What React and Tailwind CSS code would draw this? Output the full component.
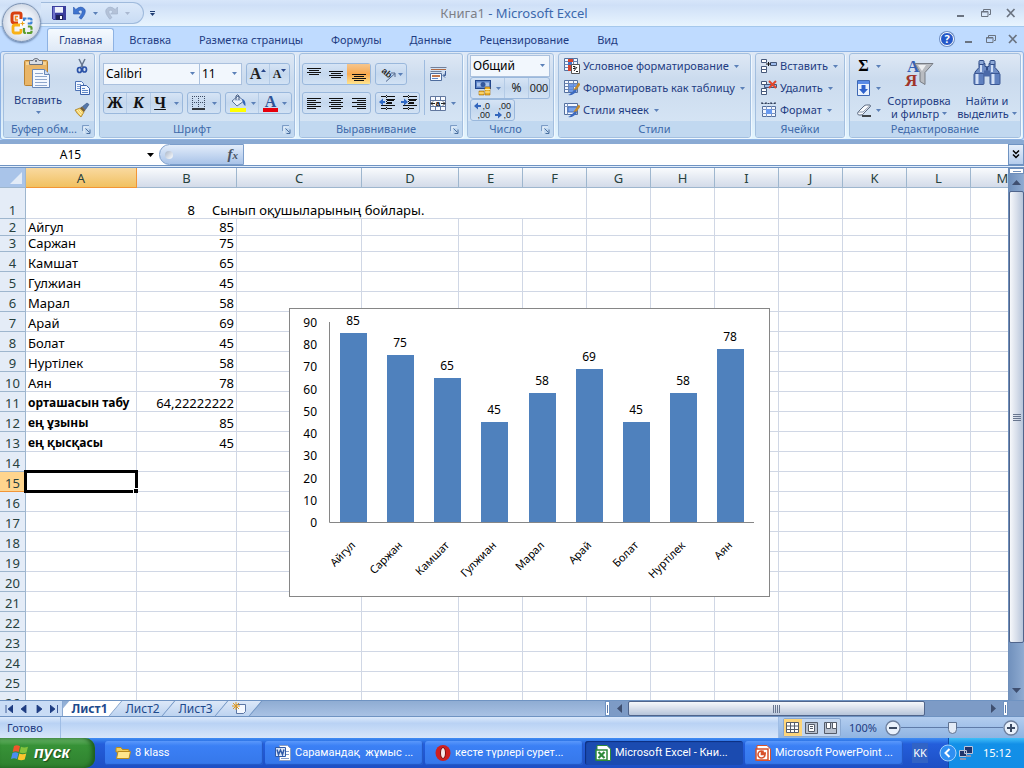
import { useState } from "react";
import clsx from "clsx";

const COLUMNS = [
  ["A", 111], ["B", 100], ["C", 125], ["D", 97], ["E", 64], ["F", 64], ["G", 64], ["H", 64], ["I", 64],
  ["J", 64], ["K", 64], ["L", 64], ["M", 64],
];

const ROWS = {
  2: ["Айгул", "85"],
  3: ["Саржан", "75"],
  4: ["Камшат", "65"],
  5: ["Гулжиан", "45"],
  6: ["Марал", "58"],
  7: ["Арай", "69"],
  8: ["Болат", "45"],
  9: ["Нуртілек", "58"],
  10: ["Аян", "78"],
  11: ["орташасын табу", "64,22222222"],
  12: ["ең ұзыны", "85"],
  13: ["ең қысқасы", "45"],
};

const ROW_COUNT = 26;
const SERIES = Object.entries(ROWS).filter(([n]) => n <= 10).map(([, [name, value]]) => ({ name, value: Number(value) }));

/* ---------- small shared parts ---------- */

function Arrow({ className = "text-[#5b80b8]" }) {
  return (
    <svg width="5" height="3" viewBox="0 0 5 3" className={clsx("shrink-0", className)} aria-hidden="true">
      <path d="M0 0h5L2.500 3z" fill="currentColor" />
    </svg>
  );
}

function Box({ children, className }) {
  return (
    <div className={clsx("flex h-[22px] rounded-[3px] border border-[#9ab8dc] bg-linear-to-b from-[#d6e4f5] via-[#c5d8ee] to-[#d2e2f4]", className)}>
      {children}
    </div>
  );
}

function Tool({ label, children, className = "w-[22px]" }) {
  return (
    <button type="button" aria-label={label} className={clsx("flex items-center justify-center", className)}>
      {children}
    </button>
  );
}

function Dropdown({ label, value, className }) {
  return (
    <div className={clsx("relative h-[22px] border border-[#abc1de] bg-[#f2f7fd]", className)}>
      <select aria-label={label} defaultValue={value} className="block h-5 w-full appearance-none bg-transparent pl-[2px] text-[12px] leading-5 text-black outline-none">
        <option>{value}</option>
      </select>
      <span className="pointer-events-none absolute top-[8px] right-[4px] flex">
        <Arrow />
      </span>
    </div>
  );
}

function Group({ title, launcher, className, children }) {
  return (
    <section className={clsx("flex h-[85px] shrink-0 flex-col overflow-hidden rounded-[3px] border border-[#a3bfdf] bg-linear-to-b from-[#dee8f5] via-[#cbdbee] via-30% to-[#d8e7f6] shadow-[1px_1px_0_#f0f8ff]", className)}>
      <div className="flex min-h-0 flex-1">{children}</div>
      <div className="flex h-4 items-center bg-[#c1d8f0] px-[3px] text-[11px] leading-4 text-[#3e6aaa]">
        <span className="flex-1 text-center whitespace-nowrap">{title}</span>
        {launcher && (
          <button type="button" aria-label={"Параметры: " + title} className="ml-px">
            <svg width="9" height="9" viewBox="0 0 9 9" fill="none">
              <path d="M.5 6V.5H7" stroke="#7c9cc6" />
              <path d="M3.500 3.500l4 4M8 4.500v4H4.500" stroke="#4a6f9f" />
              <path d="M2 8.500V2h5" stroke="#fff" opacity=".7" />
            </svg>
          </button>
        )}
      </div>
    </section>
  );
}

function Command({ icon, children }) {
  return (
    <button type="button" className="flex h-[22px] items-center whitespace-nowrap text-[11px] leading-4 text-[#1e3c82]">
      {icon}
      <span className="mr-[5px] ml-[3px]">{children}</span>
      <Arrow />
    </button>
  );
}

/* ---------- icons ---------- */

function Lines({ rows }) {
  return (
    <svg width="16" height="16" viewBox="0 0 16 16" aria-hidden="true">
      {rows.map(([x, y, w]) => (
        <rect key={y} x={x} y={y} width={w} height="1" fill="#111" />
      ))}
    </svg>
  );
}

const ALIGN_V = {
  top: [[1, 2, 14], [3, 4, 10], [1, 6, 14], [3, 8, 10]],
  middle: [[1, 5, 14], [3, 7, 10], [1, 9, 14], [3, 11, 10]],
  bottom: [[1, 8, 14], [3, 10, 10], [1, 12, 14], [3, 14, 10]],
};
const ALIGN_H = {
  left: [[1, 3, 14], [1, 5, 9], [1, 7, 14], [1, 9, 9], [1, 11, 14], [1, 13, 9]],
  center: [[1, 3, 14], [3, 5, 10], [1, 7, 14], [3, 9, 10], [1, 11, 14], [3, 13, 10]],
  right: [[1, 3, 14], [6, 5, 9], [1, 7, 14], [6, 9, 9], [1, 11, 14], [6, 13, 9]],
};

function IndentIcon({ inward }) {
  return (
    <svg width="18" height="16" viewBox="0 0 18 16" aria-hidden="true">
      <path d="M3 1.500h5M9 1.500h8M9 4.500h8M9 7.500h5M3 10.500h5M9 10.500h8M3 13.500h5M9 13.500h5" stroke="#111" />
      <path d="M9 4h7v2H9zM9 7h5v2H9z" fill="#111" />
      <path d="M8.500 0v15" stroke="#111" strokeDasharray="1 1" />
      {inward ? <path d="M1 6h3V3.500L8 7l-4 3.500V8H1z" fill="#2f68c4" /> : <path d="M7 6H5V3.500L1 7l4 3.500V8h2z" fill="#2f68c4" />}
    </svg>
  );
}

function OfficeLogo() {
  return (
    <svg width="24" height="24" viewBox="0 0 24 24" fill="none" aria-hidden="true">
      <path d="M11 8V3.500Q11 2 9.500 2h-5Q2 2 2 4.500v5Q2 12 4.500 12H8" stroke="#d8400f" strokeWidth="3" />
      <path d="M8 5.500H5.500V9H8" stroke="#f58a1f" strokeWidth="1.500" />
      <path d="M14 10V7.500h6q1.500 0 1.500 1.500v2q0 1.500-1.500 1.500h-3" stroke="#3b83d6" strokeWidth="2.200" strokeDasharray="5 1" />
      <path d="M10 14H5q-2 0-2 2v4q0 2 2 2h4q2 0 2-2v-2" stroke="#f9b115" strokeWidth="2.800" />
      <path d="M14 17v3.500q0 1.500 1.500 1.500h4.500q1.500 0 1.500-1.500V17q0-1.500-1.500-1.500h-3" stroke="#5d9d2f" strokeWidth="2.200" strokeDasharray="6 1" />
      <path d="M10.500 12.500h4M12.500 10.500v4" stroke="#e9a21c" strokeWidth="1.200" />
    </svg>
  );
}

function SaveIcon() {
  return (
    <svg width="14" height="14" viewBox="0 0 14 14" aria-hidden="true">
      <path d="M0 0h14v14H1.500L0 12.500z" fill="#3a3d9c" />
      <path d="M1 1h2v12H1z" fill="#6e72cc" />
      <path d="M3 1h8v6H3z" fill="#eef1fb" />
      <path d="M3 6h8v1H3z" fill="#b9bfe5" />
      <path d="M4 9h7v5H4z" fill="#1f2358" />
      <path d="M8 10h2v3H8z" fill="#fff" />
    </svg>
  );
}

function UndoIcon({ redo }) {
  return (
    <svg width="13" height="14" viewBox="0 0 13 14" className={redo ? "-scale-x-100" : ""} aria-hidden="true">
      <path d="M.5 1v7h7L5 5.800Q7 3.400 8.600 4.400 10.400 6.500 6 11.500l2.200 1.700Q14 6.500 11.600 3 8-1 2.800 3.500z" fill={redo ? "#b4c2d8" : "#3f74cf"} stroke={redo ? "#9fb0ca" : "#2c58ac"} strokeWidth=".6" />
    </svg>
  );
}

function PasteIcon() {
  return (
    <svg width="28" height="32" viewBox="0 0 28 32" aria-hidden="true">
      <rect x=".5" y="2.500" width="23" height="25" rx="1" fill="#e9b567" stroke="#b98233" />
      <path d="M2 4h20v3H2z" fill="#f6d394" />
      <path d="M5.500 6.500v-3q0-1 1-1H9Q9.500.5 12 .5t3 2h2.500q1 0 1 1v3z" fill="#d9dde4" stroke="#6b7280" />
      <circle cx="12" cy="3" r="1" fill="#555d6b" />
      <path d="M8.500 11.500h12l5 5v13h-17z" fill="#f4f8ff" stroke="#6787b8" />
      <path d="M20.500 11.500v5h5" fill="#cfdcf0" stroke="#6787b8" />
      <path d="M11 15.500h8M11 18.500h12M11 21.500h12M11 24.500h12M11 27.500h12" stroke="#8ea6cc" />
    </svg>
  );
}

function CutIcon() {
  return (
    <svg width="16" height="16" viewBox="0 0 16 16" fill="none" aria-hidden="true">
      <path d="M5 1l4.500 9M11 1L6.500 10" stroke="#66768f" strokeWidth="1.500" />
      <ellipse cx="5.500" cy="12" rx="2" ry="2.500" stroke="#2b52a8" strokeWidth="1.700" />
      <ellipse cx="10.500" cy="11.500" rx="2" ry="2.500" stroke="#2b52a8" strokeWidth="1.700" />
    </svg>
  );
}

function CopyIcon() {
  return (
    <svg width="16" height="16" viewBox="0 0 16 16" aria-hidden="true">
      <path d="M1.500 1.500h6l2 2v7h-8z" fill="#f2f7ff" stroke="#4c72b5" />
      <path d="M3 4.500h4M3 6.500h5M3 8.500h3" stroke="#7d9fd4" />
      <path d="M6.500 5.500h6l3 3v6h-9z" fill="#f2f7ff" stroke="#3c62aa" />
      <path d="M8 8.500h3M8 10.500h6M8 12.500h6" stroke="#5f86c6" />
    </svg>
  );
}

function BrushIcon() {
  return (
    <svg width="16" height="16" viewBox="0 0 16 16" aria-hidden="true">
      <path d="M1 8l5-2 4 4-3 5Q3 12 1 8z" fill="#f2cf63" stroke="#a97d22" strokeWidth=".8" />
      <path d="M3 8l4 5M5 7.500l3 4" stroke="#fff3c0" />
      <path d="M6 6l2-1.500L11.500 8 10 10z" fill="#76603c" />
      <path d="M8.500 4.500L13 1l2 1.500-3.500 5z" fill="#5677a9" stroke="#31517f" strokeWidth=".6" />
    </svg>
  );
}

function BorderIcon() {
  return (
    <svg width="14" height="14" viewBox="0 0 14 14" aria-hidden="true">
      <path d="M.5 0v12M6.500 0v12M12.500 0v12M0 .5h13M0 6.500h13" stroke="#3c4b63" strokeDasharray="1 1" />
      <path d="M0 13h13" stroke="#000" strokeWidth="1.500" />
    </svg>
  );
}

function FillIcon() {
  return (
    <svg width="18" height="18" viewBox="0 0 18 18" aria-hidden="true">
      <path d="M3 7l6-5 6 5-7 5z" fill="#eaf1fb" stroke="#54709c" />
      <path d="M5 7l4-3 4 3z" fill="#c0d0e8" />
      <path d="M7 6V2q1.500-2.500 3 0v4" fill="none" stroke="#44597c" />
      <path d="M13 5q4 1 3.500 7Q14 11 13 5z" fill="#3465b5" />
      <rect x="1" y="14" width="16" height="4" fill="#ff0" />
    </svg>
  );
}

function OrientationIcon() {
  return (
    <svg width="17" height="17" viewBox="0 0 17 17" aria-hidden="true">
      <text x="2" y="9" transform="rotate(40 6 6)" fontFamily="Liberation Sans" fontSize="9" fontWeight="700" fill="#2b2b2b">ab</text>
      <path d="M6 15.500l9-8M11 7h4v4" fill="none" stroke="#53688c" />
    </svg>
  );
}

function WrapIcon() {
  return (
    <svg width="17" height="16" viewBox="0 0 17 16" aria-hidden="true">
      <path d="M.5 1.500h16M.5 5.500h11" stroke="#70809c" />
      <path d="M1 3.500h15" stroke="#b06a44" />
      <path d="M.5 7.500h11v7H.5z" fill="#f7faff" stroke="#4e6c9d" />
      <path d="M2 10h8" stroke="#c0764c" strokeWidth="2" />
      <path d="M2 12.500h6" stroke="#5f86c6" />
      <path d="M15.500 5v4.500h-2M15 7.500l-2 2 2 2" fill="none" stroke="#3c5d96" />
    </svg>
  );
}

function MergeIcon() {
  return (
    <svg width="16" height="15" viewBox="0 0 16 15" aria-hidden="true">
      <path d="M.5.5h15v14H.5zM.5 4.500h15M.5 10.500h15M5.500.5v4M10.500.5v4M5.500 10.500v4M10.500 10.500v4" fill="#f7faff" stroke="#61779e" />
      <path d="M1 7.500h4M11 7.500h4M3 5.500L1 7.500l2 2M13 5.500l2 2-2 2" fill="none" stroke="#222" />
      <text x="8" y="10" textAnchor="middle" fontFamily="Liberation Sans" fontSize="8" fontWeight="700">a</text>
    </svg>
  );
}

function CurrencyIcon() {
  return (
    <svg width="17" height="16" viewBox="0 0 17 16" aria-hidden="true">
      <rect x=".5" y=".5" width="15" height="8" fill="#5b83c7" stroke="#22468c" />
      <path d="M2 2.500h12v4H2z" fill="#a9c3ec" />
      <ellipse cx="8" cy="4.500" rx="2.500" ry="2.500" fill="#34589d" />
      <path d="M10 7h5v8h-5zM4 11h5v4H4z" fill="#eeb229" stroke="#a56d0d" strokeWidth=".6" />
      <path d="M10 9.500h5M10 12h5M4 13h5" stroke="#fff0a8" />
    </svg>
  );
}

function DecimalIcon({ less }) {
  return (
    <svg width="18" height="20" viewBox="0 0 18 20" aria-hidden="true">
      <g fontFamily="Liberation Sans" fontSize="9" fill="#1d1d1d" textAnchor="end">
        <text x="17" y="9">{less ? ",00" : ",0"}</text>
        <text x="17" y="18">{less ? ",0" : ",00"}</text>
      </g>
      {less ? <path d="M1 14h3v-2.500L8 15l-4 3.500V16H1z" fill="#3366bd" /> : <path d="M8 5H5V2.500L1 6l4 3.500V7h3z" fill="#3366bd" />}
    </svg>
  );
}

function GridIcon({ kind }) {
  return (
    <svg width="16" height="16" viewBox="0 0 16 16" aria-hidden="true">
      {kind === "styles" ? (
        <>
          <path d="M.5 1.500h13v11H.5z" fill="#f4f8ff" stroke="#54709f" />
          <path d="M.5 4.500h13M3.500 1.500v11" stroke="#7c94bd" />
          <path d="M4 5h9v5H4z" fill="#78a3ea" stroke="#426dba" />
        </>
      ) : (
        <>
          <path d="M.5.5h13v12H.5z" fill="#f4f8ff" stroke="#54709f" />
          <path d="M.5 3.500h13M.5 6.500h13M.5 9.500h13M4.500.5v12M9.500.5v12" stroke="#6b85b2" />
        </>
      )}
      {kind === "conditional" && (
        <>
          <path d="M4 1h5v3H4zM4 7h3v6H4z" fill="#d9432e" />
          <path d="M4 4h4v3H4z" fill="#436fc5" />
          <path d="M7.500 6.500h8v9h-8z" fill="#fff" stroke="#555" />
          <path d="M9 8.500h2v2H9M12 13.500h2M10 13l3-4" fill="none" stroke="#222" />
        </>
      )}
      {kind === "table" && <path d="M5 4h8v3H5zM5 7h4v5H5z" fill="#5b8be0" opacity=".85" />}
      {kind !== "conditional" && (
        <>
          <path d="M15.500 3.500l-5 7" stroke="#c58b2c" strokeWidth="2.500" />
          <path d="M11.500 9L7 13q-2 2-3 2 5 1 9-4z" fill="#3c6ac0" />
        </>
      )}
    </svg>
  );
}

function CellsIcon({ kind }) {
  if (kind === "format") {
    return (
      <svg width="16" height="16" viewBox="0 0 16 16" aria-hidden="true">
        <path d="M.5 1.500h14M1 0v3M5 0v3M10 0v3M14 0v3" stroke="#2e3e5a" strokeDasharray="2 1" />
        <path d="M1.500 4.500h13v10h-13z" fill="#f4f8ff" stroke="#54709f" />
        <path d="M5.500 4v11M10.500 4v11M1 7.500h14M1 11.500h14" stroke="#7c94bd" />
        <path d="M5 7h6v5H5z" fill="#6a9bf0" />
      </svg>
    );
  }
  return (
    <svg width="16" height="16" viewBox="0 0 16 16" aria-hidden="true">
      <path d="M.5 1.500h5v3h-5zM.5 8.500h5v3h-5zM.5 11.500h5v3h-5z" fill="#fff" stroke="#46597a" />
      <path d="M9.500 4.500h6v3h-6z" fill="#9ebcec" stroke="#46597a" />
      {kind === "insert" ? (
        <path d="M5 6h5M7.500 4v4" stroke="#111" />
      ) : (
        <>
          <path d="M3.500 4.500h6v3h-6z" fill="#9ebcec" stroke="#46597a" />
          <path d="M8 1l7 7M15 1L8 8" stroke="#e2472c" strokeWidth="2" />
        </>
      )}
    </svg>
  );
}

function FillDownIcon() {
  return (
    <svg width="13" height="16" viewBox="0 0 13 16" aria-hidden="true">
      <path d="M.5.5h12v15H.5z" fill="#e9f1fd" stroke="#3f68b3" />
      <path d="M1 1h11v3H1z" fill="#5a8be6" />
      <path d="M4.500 5h4v4h2.500l-4.500 5L2 9h2.500z" fill="#2f62cc" />
    </svg>
  );
}

function EraserIcon() {
  return (
    <svg width="15" height="13" viewBox="0 0 15 13" aria-hidden="true">
      <path d="M1 8l6-6q1-1 2.500-1H13q1 1 0 2L7 9q-1 2-3 2H1.500Q0 10 1 8z" fill="#f8fafd" stroke="#5c6a80" />
      <path d="M1 8h5l7-6.500" fill="none" stroke="#8b98ad" />
      <path d="M5 12h9" stroke="#111" strokeWidth="1.500" />
    </svg>
  );
}

function SortIcon() {
  return (
    <svg width="30" height="34" viewBox="0 0 30 34" aria-hidden="true">
      <text x="3" y="14" fontFamily="Liberation Serif" fontSize="17" fontWeight="700" fill="#3561b4">А</text>
      <text x="1" y="28" fontFamily="Liberation Serif" fontSize="17" fontWeight="700" fill="#a0352b">Я</text>
      <path d="M11 5.500h18l-8 9v12l-5-3v-9z" fill="#b9bcc1" stroke="#777c84" />
      <path d="M14 7h8L18 13z" fill="#eceef0" />
    </svg>
  );
}

function FindIcon() {
  return (
    <svg width="28" height="26" viewBox="0 0 28 26" aria-hidden="true">
      <path d="M6 3.500h6v3h1.500v4h1v-4H16v-3h6v4l4 4.500v3H2v-3l4-4.500z" fill="#6e8cc4" stroke="#2f4b86" />
      <rect x="6" y=".5" width="5" height="4" rx="1" fill="#8faad8" stroke="#2f4b86" />
      <rect x="17" y=".5" width="5" height="4" rx="1" fill="#8faad8" stroke="#2f4b86" />
      <rect x="1" y="13.500" width="10" height="11" rx="1" fill="#5f80bf" stroke="#3c5894" />
      <rect x="17" y="13.500" width="10" height="11" rx="1" fill="#5f80bf" stroke="#3c5894" />
      <path d="M11 10.500h6v6h-6z" fill="#4a69a8" />
      <path d="M4 14v10M20 14v10" stroke="#d3e0f6" strokeWidth="3" />
      <path d="M8 5v7M19 5v7" stroke="#cfdef6" strokeWidth="2" />
    </svg>
  );
}

function WindowButtons({ className }) {
  return (
    <div className={clsx("flex items-center text-[#6a7380]", className)}>
      <button type="button" aria-label="Свернуть">
        <svg width="10" height="10" viewBox="0 0 10 10"><path d="M1 8h7" stroke="currentColor" strokeWidth="2" /></svg>
      </button>
      <button type="button" aria-label="Восстановить">
        <svg width="10" height="10" viewBox="0 0 10 10" fill="none">
          <path d="M2.500 3V1.500h7v5H8" stroke="currentColor" />
          <path d="M.5 3.500H7v5H.5zM.5 4h6" stroke="currentColor" />
        </svg>
      </button>
      <button type="button" aria-label="Закрыть">
        <svg width="10" height="10" viewBox="0 0 10 10"><path d="M1 1l7.500 8M8.500 1L1 9" stroke="currentColor" strokeWidth="1.700" /></svg>
      </button>
    </div>
  );
}

/* ---------- window head ---------- */

function TitleBar() {
  return (
    <header className="relative flex h-[27px] shrink-0 items-center justify-between border-b border-[#a5c8ec] bg-linear-to-b from-[#d7e6fa] via-[#cfe0f7] via-20% to-[#e8f4fe]">
      <button type="button" aria-label="Кнопка Office" className="absolute top-[3px] left-[2px] z-10 flex size-[39px] items-center justify-center rounded-full border border-[#7d93b3] bg-radial from-white via-[#e8edf5] to-[#b3bfd1] shadow-[0_1px_2px_#5f7ba5]">
        <OfficeLogo />
      </button>
      <div className="ml-[41px] flex items-center">
        <div className="flex h-[22px] w-[103px] items-center gap-[7px] rounded-r-full border border-l-0 border-[#9fbadc] bg-linear-to-b from-[#dce9fa] to-[#c9dcf4] pl-[11px]">
          <button type="button" aria-label="Сохранить"><SaveIcon /></button>
          <button type="button" aria-label="Отменить"><UndoIcon /></button>
          <Arrow />
          <button type="button" aria-label="Вернуть"><UndoIcon redo /></button>
          <Arrow className="text-[#a9b8d0]" />
        </div>
        <button type="button" aria-label="Настройка панели" className="ml-[6px] flex flex-col items-center gap-px border-t border-[#1e3c72] pt-px">
          <Arrow className="text-[#1e3c72]" />
        </button>
      </div>
      <h1 className="absolute inset-x-0 pl-1 text-center text-[13px] leading-4 text-[#3c69ad]">
        <span className="text-[#7d8087]">Книга1</span> - Microsoft Excel
      </h1>
      <div className="mr-2">
        <WindowButtons className="gap-[15px]" />
      </div>
    </header>
  );
}

const TABS = ["Главная", "Вставка", "Разметка страницы", "Формулы", "Данные", "Рецензирование", "Вид"];

function RibbonTabs() {
  const [active, setActive] = useState(TABS[0]);
  return (
    <nav className="flex h-6 shrink-0 items-end bg-[#bfdbff] pr-[6px] pl-[47px]">
      {TABS.map((tab) => (
        <button
          key={tab}
          type="button"
          onClick={() => setActive(tab)}
          className={clsx(
            "h-[23px] rounded-t-[3px] border border-b-0 text-[11px] leading-4 text-[#1e3c82]",
            tab === active ? "mr-px border-[#8db2e3] bg-linear-to-b from-[#f5faff] to-[#dfe9f6] px-[11px]" : "border-transparent px-[13px]"
          )}
        >
          {tab}
        </button>
      ))}
      <div className="ml-auto flex items-center gap-[10px] self-center">
        <button type="button" aria-label="Справка" className="flex size-[14px] items-center justify-center rounded-full border border-white bg-[#2458c8] text-[11px] leading-3 font-bold text-white shadow-[0_0_0_1px_#6f8fc4]">
          ?
        </button>
        <WindowButtons className="gap-[12px]" />
      </div>
    </nav>
  );
}

function ClipboardGroup() {
  return (
    <Group title="Буфер обм..." launcher className="w-[92px]">
      <button type="button" className="flex w-[68px] flex-col items-center pt-[4px] text-[11px] leading-4 text-[#1e3c82]">
        <PasteIcon />
        <span className="mt-[2px] mb-[3px]">Вставить</span>
        <Arrow />
      </button>
      <div className="flex flex-col justify-between pt-[4px] pb-[3px] pl-[2px]">
        <button type="button" aria-label="Вырезать"><CutIcon /></button>
        <button type="button" aria-label="Копировать"><CopyIcon /></button>
        <button type="button" aria-label="Формат по образцу"><BrushIcon /></button>
      </div>
    </Group>
  );
}

function FontGroup() {
  return (
    <Group title="Шрифт" launcher className="w-[196px]">
      <div className="flex flex-col gap-[7px] px-[3px] pt-[9px]">
        <div className="flex">
          <Dropdown label="Шрифт" value="Calibri" className="w-[97px]" />
          <Dropdown label="Размер" value="11" className="mr-1 w-[42px] border-l-0" />
          <Box>
            <Tool label="Увеличить размер шрифта">
              <span className="font-['Liberation_Serif',serif] text-[16px] leading-5 font-bold text-[#222]">A</span>
              <Arrow className="mb-2 rotate-180 text-[#27468a]" />
            </Tool>
            <Tool label="Уменьшить размер шрифта" className="w-5 border-l border-[#b4cbe6]">
              <span className="font-['Liberation_Serif',serif] text-[12px] leading-5 font-bold text-[#222]">A</span>
              <Arrow className="mb-2 text-[#27468a]" />
            </Tool>
          </Box>
        </div>
        <div className="flex gap-1 font-['Liberation_Serif',serif] text-[16px] leading-4 font-bold text-[#111]">
          <Box className="w-[80px]">
            <Tool label="Полужирный">Ж</Tool>
            <Tool label="Курсив" className="w-[24px] border-l border-[#b4cbe6] italic">К</Tool>
            <Tool label="Подчеркнутый" className="flex-1 gap-[8px] border-l border-[#b4cbe6]"><span className="underline">Ч</span><Arrow /></Tool>
          </Box>
          <Box className="w-[34px]">
            <Tool label="Границы" className="flex-1 gap-[6px]"><BorderIcon /><Arrow /></Tool>
          </Box>
          <Box className="w-[67px]">
            <Tool label="Цвет заливки" className="flex-1 gap-[4px]"><FillIcon /><Arrow /></Tool>
            <Tool label="Цвет текста" className="flex-1 gap-[4px] border-l border-[#b4cbe6]">
              <span className="h-[18px] border-b-4 border-red-600 px-[2px] text-[16px] leading-4 text-[#2f5496]">A</span>
              <Arrow />
            </Tool>
          </Box>
        </div>
      </div>
    </Group>
  );
}

function AlignmentGroup() {
  return (
    <Group title="Выравнивание" launcher className="w-[164px]">
      <div className="flex flex-col gap-[7px] pt-[9px] pl-[2px]">
        <div className="flex gap-1">
          <Box className="w-[69px]">
            <Tool label="По верхнему краю"><Lines rows={ALIGN_V.top} /></Tool>
            <Tool label="По середине"><Lines rows={ALIGN_V.middle} /></Tool>
            <Tool label="По нижнему краю" className="flex-1 bg-linear-to-b from-[#f5c58c] via-[#f9a94c] to-[#fde48f]"><Lines rows={ALIGN_V.bottom} /></Tool>
          </Box>
          <Box className="w-[32px]">
            <Tool label="Ориентация" className="flex-1 gap-px"><OrientationIcon /><Arrow /></Tool>
          </Box>
        </div>
        <div className="flex gap-1">
          <Box className="w-[69px]">
            <Tool label="По левому краю"><Lines rows={ALIGN_H.left} /></Tool>
            <Tool label="По центру"><Lines rows={ALIGN_H.center} /></Tool>
            <Tool label="По правому краю" className="flex-1"><Lines rows={ALIGN_H.right} /></Tool>
          </Box>
          <Box className="w-[45px]">
            <Tool label="Уменьшить отступ"><IndentIcon /></Tool>
            <Tool label="Увеличить отступ" className="flex-1"><IndentIcon inward /></Tool>
          </Box>
        </div>
      </div>
      <div className="my-[6px] ml-1 w-px bg-[#9ebbdf]" />
      <div className="flex flex-col gap-[7px] pt-[9px] pl-[5px]">
        <Tool label="Перенос текста" className="h-[22px] w-[17px]"><WrapIcon /></Tool>
        <Tool label="Объединить" className="h-[22px] gap-[5px]"><MergeIcon /><Arrow /></Tool>
      </div>
    </Group>
  );
}

function NumberGroup() {
  return (
    <Group title="Число" launcher className="w-[87px]">
      <div className="flex flex-col pt-px pl-[2px]">
        <Dropdown label="Числовой формат" value="Общий" className="w-[80px]" />
        <Box className="w-[80px] text-[12px] leading-4 text-[#222]">
          <Tool label="Финансовый формат" className="w-[33px] gap-[4px]"><CurrencyIcon /><Arrow /></Tool>
          <Tool label="Процентный формат" className="w-[24px] border-l border-[#b4cbe6]">%</Tool>
          <Tool label="Формат с разделителями" className="flex-1 border-l border-[#b4cbe6]">
            <span className="font-['Liberation_Sans',sans-serif] text-[11px]">000</span>
          </Tool>
        </Box>
        <Box className="w-[45px]">
          <Tool label="Увеличить разрядность"><DecimalIcon /></Tool>
          <Tool label="Уменьшить разрядность"><DecimalIcon less /></Tool>
        </Box>
      </div>
    </Group>
  );
}

function EditingGroup() {
  return (
    <Group title="Редактирование" className="w-[172px]">
      <div className="flex w-[34px] flex-col items-start pt-px pl-[7px]">
        <Tool label="Сумма" className="h-[22px] gap-[6px]"><span className="w-[13px] font-['Liberation_Serif',serif] text-[16px] font-bold">Σ</span><Arrow /></Tool>
        <Tool label="Заполнить" className="h-[22px] gap-[6px]"><FillDownIcon /><Arrow /></Tool>
        <Tool label="Очистить" className="h-[22px] gap-[4px]"><EraserIcon /><Arrow /></Tool>
      </div>
      <button type="button" className="flex w-[70px] flex-col items-center pt-[4px] text-[11px] leading-[13px] whitespace-nowrap text-[#1e3c82]">
        <span className="flex h-[36px]"><SortIcon /></span>
        <span>Сортировка</span>
        <span className="flex items-center gap-[3px]">и фильтр <Arrow /></span>
      </button>
      <button type="button" className="flex flex-1 flex-col items-center pt-[4px] text-[11px] leading-[13px] whitespace-nowrap text-[#1e3c82]">
        <span className="flex h-[36px] pt-[2px]"><FindIcon /></span>
        <span>Найти и</span>
        <span className="flex items-center gap-[3px]">выделить <Arrow /></span>
      </button>
    </Group>
  );
}

function Ribbon() {
  return (
    <div className="shrink-0 border-b-4 border-[#8aaad3] bg-[#bfdbff]">
      <div className="flex gap-1 overflow-hidden rounded-[3px] border border-[#8db2e3] bg-linear-to-b from-[#dfe9f6] via-[#d2e2f4] to-[#e3f5fe] px-[2px] pt-px pb-px">
        <ClipboardGroup />
        <FontGroup />
        <AlignmentGroup />
        <NumberGroup />
        <Group title="Стили" className="w-[193px]">
          <div className="flex flex-col items-start pt-px pl-[5px]">
            <Command icon={<GridIcon kind="conditional" />}>Условное форматирование</Command>
            <Command icon={<GridIcon kind="table" />}>Форматировать как таблицу</Command>
            <Command icon={<GridIcon kind="styles" />}>Стили ячеек</Command>
          </div>
        </Group>
        <Group title="Ячейки" className="w-[90px]">
          <div className="flex flex-col items-start pt-px pl-[5px]">
            <Command icon={<CellsIcon kind="insert" />}>Вставить</Command>
            <Command icon={<CellsIcon kind="delete" />}>Удалить</Command>
            <Command icon={<CellsIcon kind="format" />}>Формат</Command>
          </div>
        </Group>
        <EditingGroup />
      </div>
    </div>
  );
}

function FormulaBar() {
  return (
    <div className="flex h-[21px] shrink-0 bg-white">
      <input aria-label="Имя" defaultValue="A15" className="w-[141px] text-center text-[12px] leading-4 outline-none" />
      <button type="button" aria-label="Список имен" className="flex w-[18px] items-center justify-center">
        <svg width="7" height="4" viewBox="0 0 7 4"><path d="M0 0h7L3.500 4z" /></svg>
      </button>
      <div className="flex w-[85px] items-center justify-between rounded-l-full border border-[#7c9ecb] bg-linear-to-b from-[#e3edfa] to-[#a9c3e8] pr-[5px] pl-[5px]">
        <span className="size-2 rounded-full bg-linear-to-br from-[#a9b6c8] to-white" />
        <button type="button" aria-label="Вставить функцию" className="font-['Liberation_Serif',serif] text-[15px] leading-4 font-bold text-[#4a5464] italic">
          f<span className="text-[11px]">x</span>
        </button>
      </div>
      <input aria-label="Строка формул" className="min-w-0 flex-1 outline-none" />
      <button type="button" aria-label="Развернуть строку формул" className="flex w-4 items-center justify-center border border-[#6f93c2] bg-linear-to-b from-[#e6effb] to-[#b6cdec]">
        <svg width="8" height="9" viewBox="0 0 8 9" fill="none"><path d="M1 .5l3 3 3-3M1 4.500l3 3 3-3" stroke="#000" strokeWidth="1.500" /></svg>
      </button>
    </div>
  );
}

/* ---------- sheet ---------- */

function Chart() {
  const base = 214;
  const scale = 200 / 90;
  return (
    <svg width="481" height="289" viewBox="0 0 481 289" className="absolute top-[140px] left-[289px]" fontFamily="'Noto Sans', sans-serif" fontSize="12" role="img" aria-label="Сынып оқушыларының бойлары">
      <rect x=".5" y=".5" width="480" height="288" fill="#fff" stroke="#868686" />
      {[0, 10, 20, 30, 40, 50, 60, 70, 80, 90].map((tick) => (
        <text key={tick} x="28" y={Math.round(base - tick * scale) + 5} textAnchor="end">{tick}</text>
      ))}
      {SERIES.map(({ name, value }, i) => {
        const left = Math.floor(51.45 + i * 47.15);
        const top = Math.round(base - value * scale);
        return (
          <g key={name}>
            <rect x={left} y={top} width="27" height={base - top} fill="#4f81bd" />
            <text x={left + 13} y={top - 8} textAnchor="middle">{value}</text>
            <text transform={`translate(${left + 16} 238) rotate(-45)`} textAnchor="end" fontSize="11">{name}</text>
          </g>
        );
      })}
      <path d="M40.500 14v200.500H465" fill="none" stroke="#868686" />
    </svg>
  );
}

function SheetRow({ n }) {
  const [name, value] = ROWS[n] || [];
  const current = n === 15;
  return (
    <tr className={clsx(n === 1 ? "h-[31px]" : n === 2 ? "h-[17px]" : n === 3 ? "h-4" : "h-5")}>
      <th scope="row" className={clsx("border-r border-b p-0 pb-px text-center align-bottom font-normal text-[#27413e]", current ? "border-[#f29536] bg-[#ffd58d]" : "border-[#9eb6ce] bg-[#e4ecf7]")}>
        {n}
      </th>
      {n === 1 ? (
        <td colSpan="6" className="border-r border-b border-[#d0d7e5] p-0 pb-px text-center align-bottom whitespace-pre">
          {"8     Сынып оқушыларының бойлары."}
        </td>
      ) : (
        COLUMNS.slice(0, 6).map(([letter], i) => (
          <td
            key={letter}
            className={clsx(
              "border-r border-b border-[#d0d7e5] px-[2px] pt-0 pb-px align-bottom whitespace-nowrap",
              i === 1 && "text-right",
              i === 0 && n > 10 && "text-[12px] font-bold",
              i === 0 && current && "relative"
            )}
          >
            {i === 0 ? name : i === 1 ? value : null}
            {i === 0 && current && (
              <span className="absolute -inset-[2px] border-[3px] border-black">
                <span className="absolute -right-[3px] -bottom-[3px] size-[5px] border-t border-l border-white bg-black" />
              </span>
            )}
          </td>
        ))
      )}
      {COLUMNS.slice(6).map(([letter]) => (
        <td key={letter} className="border-r border-b border-[#d0d7e5] p-0" />
      ))}
    </tr>
  );
}

function Sheet() {
  return (
    <div className="relative min-w-0 flex-1 overflow-hidden bg-white">
      <table className="w-px table-fixed border-separate border-spacing-0 text-[13px] leading-[14px] text-black">
        <colgroup>
          <col style={{ width: 26 }} />
          {COLUMNS.map(([letter, width]) => (
            <col key={letter} style={{ width }} />
          ))}
        </colgroup>
        <thead>
          <tr className="h-5">
            <td className="border-r border-b border-[#9eb6ce] bg-[#a9c4e9] p-0">
              <svg width="12" height="12" viewBox="0 0 12 12" className="mr-[3px] ml-auto" aria-hidden="true"><path d="M12 0v12H0z" fill="#e2ebf7" /></svg>
            </td>
            {COLUMNS.map(([letter]) => (
              <th
                key={letter}
                scope="col"
                className={clsx(
                  "border-r border-b bg-linear-to-b p-0 text-center font-normal text-[#27413e]",
                  letter === "A" ? "border-[#f29536] from-[#f9d99f] to-[#f1c15f]" : "border-[#9eb6ce] from-[#f9fbfd] to-[#d3dbe9]"
                )}
              >
                {letter}
              </th>
            ))}
          </tr>
        </thead>
        <tbody>
          {Array.from({ length: ROW_COUNT }, (_, i) => (
            <SheetRow key={i} n={i + 1} />
          ))}
        </tbody>
      </table>
      <Chart />
    </div>
  );
}

function VerticalScroll() {
  return (
    <div className="flex w-4 shrink-0 flex-col items-center border-l border-[#6f8fbb] bg-linear-to-r from-[#7191bd] to-[#8fabd1]">
      <span className="flex h-[6px] w-full items-center justify-center border border-[#6f8fbb] bg-white"><span className="h-px w-2 bg-[#6f8fbb]" /></span>
      <button type="button" aria-label="Вверх" className="flex h-[17px] items-center justify-center">
        <svg width="9" height="5" viewBox="0 0 9 5"><path d="M0 5h9L4.500 0z" fill="#3f4f70" /></svg>
      </button>
      <div className="flex w-full grow-[12] flex-col items-center justify-center gap-px rounded-[2px] border border-[#50658c] bg-linear-to-r from-[#f6f8fb] via-[#d8dfeb] to-[#b7c5da]">
        {[1, 2, 3, 4].map((i) => (
          <span key={i} className="h-px w-2 bg-[#68768f]" />
        ))}
      </div>
      <div className="grow" />
      <button type="button" aria-label="Вниз" className="flex h-5 items-center justify-center">
        <svg width="9" height="5" viewBox="0 0 9 5"><path d="M0 0h9L4.500 5z" fill="#3f4f70" /></svg>
      </button>
    </div>
  );
}

const NAV = [
  ["Первый лист", "M1 0v8M8 0v8L3 4z"],
  ["Предыдущий лист", "M6 0v8L1 4z"],
  ["Следующий лист", "M2 0v8l5-4z"],
  ["Последний лист", "M7.500 0v8M0 0v8l5-4z"],
];

function SheetTabs() {
  const [active, setActive] = useState("Лист1");
  return (
    <div className="flex h-[17px] shrink-0 border-t border-b border-[#6f93c2] bg-linear-to-b from-[#8facd3] to-[#a9c2e4]">
      <div className="z-10 flex w-[63px] items-center justify-around border-r border-[#8aa9d2] bg-[#c9dcf5] px-px">
        {NAV.map(([label, d]) => (
          <button key={label} type="button" aria-label={label}>
            <svg width="8" height="8" viewBox="0 0 8 8"><path d={d} fill="#1e3c82" stroke="#1e3c82" strokeWidth=".8" /></svg>
          </button>
        ))}
      </div>
      <div className="flex">
        {["Лист1", "Лист2", "Лист3"].map((name) => (
          <button key={name} type="button" onClick={() => setActive(name)} className={clsx("relative w-[53px] text-[12px] leading-[15px] text-[#1e4a8c]", name === active && "font-bold")}>
            <span className={clsx("absolute inset-0 -skew-x-[40deg] border-r border-[#6f93c2]", name === active ? "bg-white" : "bg-linear-to-b from-[#dce8f8] to-[#bdd3f0]")} />
            <span className="relative">{name}</span>
          </button>
        ))}
        <button type="button" aria-label="Вставить лист" className="relative flex w-[34px] items-center justify-center">
          <span className="absolute inset-0 -skew-x-[40deg] border-r border-[#6f93c2] bg-linear-to-b from-[#dce8f8] to-[#bdd3f0]" />
          <svg width="14" height="13" viewBox="0 0 14 13" className="relative" aria-hidden="true">
            <path d="M4.500 2.500h9v7l-2 2h-7z" fill="#f4f8ff" stroke="#5c77a5" />
            <path d="M4 0v8M0 4h8M1 1l6 6M7 1L1 7" stroke="#e09a1f" />
          </svg>
        </button>
      </div>
      <div className="ml-auto flex w-[419px] bg-[#7d9bc6] pr-4">
        <span className="flex w-[5px] items-center justify-center border border-[#6f93c2] bg-white"><span className="h-2 w-px bg-[#5d7aa8]" /></span>
        <button type="button" aria-label="Влево" className="flex w-[18px] items-center justify-center">
          <svg width="5" height="9" viewBox="0 0 5 9"><path d="M5 0v9L0 4.500z" fill="#3f4f70" /></svg>
        </button>
        <div className="flex grow-[4] items-center justify-center gap-px rounded-[2px] border border-[#50658c] bg-linear-to-b from-[#f6f8fb] via-[#d8dfeb] to-[#b7c5da]">
          {[1, 2, 3, 4].map((i) => (
            <span key={i} className="h-2 w-px bg-[#68768f]" />
          ))}
        </div>
        <div className="grow-[0.8]" />
        <button type="button" aria-label="Вправо" className="flex w-[20px] items-center justify-center">
          <svg width="5" height="9" viewBox="0 0 5 9"><path d="M0 0v9l5-4.500z" fill="#3f4f70" /></svg>
        </button>
        <span className="flex w-[5px] items-center justify-center border border-[#6f93c2] bg-white"><span className="h-2 w-px bg-[#5d7aa8]" /></span>
      </div>
    </div>
  );
}

function ZoomButton({ label, plus }) {
  return (
    <button type="button" aria-label={label}>
      <svg width="16" height="16" viewBox="0 0 16 16">
        <circle cx="8" cy="8" r="7" fill="#e9f1fb" stroke="#6d7f9d" strokeWidth="1.300" />
        <path d={plus ? "M4 8h8M8 4v8" : "M4 8h8"} stroke="#3c4a62" strokeWidth="2" />
      </svg>
    </button>
  );
}

function StatusBar() {
  return (
    <footer className="flex h-[21px] shrink-0 items-center bg-linear-to-b from-[#dce9fb] via-[#b9d2f4] via-30% to-[#d7e6fa] text-[11px] leading-4 text-[#1e3c82]">
      <span className="flex h-full w-[61px] items-center border-r border-[#9fbde5] pl-[7px]">Готово</span>
      <div className="ml-auto flex h-full items-center border-l border-[#9fbde5] bg-linear-to-b from-[#b3cdef] to-[#8fb4e2] pl-[4px]">
        <div className="flex h-[19px] rounded-[2px] border border-[#8aa9d2] bg-[#c4d7f0]">
          <Tool label="Обычный" className="w-[18px] bg-[#fdd57a]">
            <svg width="13" height="11" viewBox="0 0 13 11"><path d="M.5.5h12v10H.5zM.5 4h12M.5 7.500h12M4.500 0v11M8.500 0v11" fill="#fff" stroke="#555c69" /></svg>
          </Tool>
          <Tool label="Разметка страницы" className="w-[19px]">
            <svg width="13" height="12" viewBox="0 0 13 12"><path d="M.5.5h12v11H.5z" fill="#b8c1cf" stroke="#555c69" /><path d="M3.500 2.500h6v7h-6z" fill="#fff" stroke="#555c69" /><path d="M5 4.500h3M5 6.500h3" stroke="#555c69" /></svg>
          </Tool>
          <Tool label="Страничный режим" className="w-[19px]">
            <svg width="13" height="12" viewBox="0 0 13 12"><path d="M.5.5h12v11H.5z" fill="#b8c1cf" stroke="#555c69" /><path d="M2.500.5h4v6h-4zM8.500.5h4v6h-4z" fill="#fff" stroke="#555c69" /></svg>
          </Tool>
        </div>
        <span className="mx-[8px]">100%</span>
        <ZoomButton label="Уменьшить масштаб" />
        <input
          type="range"
          aria-label="Масштаб"
          defaultValue="50"
          className="h-4 w-[102px] appearance-none bg-transparent bg-[linear-gradient(#5f7ba8,#5f7ba8)] bg-[length:100%_1px] bg-center bg-no-repeat [&::-webkit-slider-thumb]:h-3 [&::-webkit-slider-thumb]:w-[9px] [&::-webkit-slider-thumb]:appearance-none [&::-webkit-slider-thumb]:rounded-b-full [&::-webkit-slider-thumb]:border [&::-webkit-slider-thumb]:border-[#5f7290] [&::-webkit-slider-thumb]:bg-[#e3ebf6]"
        />
        <ZoomButton label="Увеличить масштаб" plus />
        <span className="w-[5px]" />
      </div>
    </footer>
  );
}

/* ---------- taskbar ---------- */

function FolderIcon() {
  return (
    <svg width="16" height="14" viewBox="0 0 16 14" aria-hidden="true">
      <path d="M1 2.500q0-1 1-1h4l1.500 2H13q1 0 1 1V6H1z" fill="#f3cf5c" stroke="#b98a1c" />
      <path d="M3 5.500h12.500L14 12.500H1.500z" fill="#ffe68c" stroke="#b98a1c" />
    </svg>
  );
}

function OperaIcon() {
  return (
    <svg width="16" height="16" viewBox="0 0 16 16" aria-hidden="true">
      <ellipse cx="8" cy="8" rx="7.500" ry="8" fill="#cf1f1f" />
      <ellipse cx="8" cy="8" rx="2.500" ry="5.500" fill="#f6e9e9" stroke="#7c0d0d" />
    </svg>
  );
}

function OfficeDocIcon({ kind }) {
  const color = kind === "word" ? "#2f5aa8" : kind === "excel" ? "#2f8a3a" : "#d8512b";
  return (
    <svg width="16" height="16" viewBox="0 0 16 16" fill="none" aria-hidden="true">
      {kind === "word" ? (
        <>
          <path d="M4.500.5h8l3 3v12h-11z" fill="#fff" stroke="#8a9cc0" />
          <path d="M11 6.500h3M11 9.500h3M6 13.500h8" stroke={color} opacity=".6" />
          <path d="M.5 2.500h10v9H.5z" fill="#dbe6f8" stroke={color} />
          <path d="M2 4.500l1.500 5 2-4.500 2 4.500 1.500-5" stroke={color} strokeWidth="1.500" />
        </>
      ) : (
        <path d="M2 .5h10l3.500 3.500v11.500H2z" fill="#fff" stroke={color} />
      )}
      {kind === "excel" && (
        <>
          <path d="M1 5h11v10H1z" fill="#fff" stroke={color} strokeWidth="1.500" />
          <path d="M3.500 7l6 6M9.500 7l-6 6" stroke={color} strokeWidth="2.200" />
        </>
      )}
      {kind === "powerpoint" && (
        <>
          <path d="M1 4h12v11H1z" fill="#fff" stroke={color} strokeWidth="1.500" />
          <path d="M6.500 6a3.500 3.500 0 1 0 3.500 3.500H6.500zM8 5.500V8h3" stroke={color} strokeWidth="1.600" />
        </>
      )}
    </svg>
  );
}

const TASKS = [
  { title: "8 klass", icon: <FolderIcon /> },
  { title: "Сарамандақ  жұмыс ...", icon: <OfficeDocIcon kind="word" /> },
  { title: "кесте түрлері сурет...", icon: <OperaIcon /> },
  { title: "Microsoft Excel - Кни...", icon: <OfficeDocIcon kind="excel" />, active: true },
  { title: "Microsoft PowerPoint ...", icon: <OfficeDocIcon kind="powerpoint" /> },
];

function Taskbar() {
  return (
    <div className="flex h-[30px] shrink-0 bg-linear-to-b from-[#3f8cf3] via-[#245edb] via-20% to-[#1d4fc4] text-[11px] leading-4 text-white">
      <button type="button" className="mr-[10px] flex w-[95px] items-center gap-[5px] rounded-r-[10px] bg-linear-to-b from-[#6cb86c] via-[#379237] via-25% to-[#2f812f] pl-[11px] shadow-[inset_-3px_0_4px_#1d5c1d]">
        <svg width="18" height="18" viewBox="0 0 18 18" aria-hidden="true">
          <path d="M3 2q3-1.500 6 .3L7.700 8q-3-1.500-6 0z" fill="#f0562b" />
          <path d="M10 2.700q3 1.500 7 0L15.500 8.500q-3.500 1.300-7 0z" fill="#84c33c" />
          <path d="M1.500 9q3-1.500 6 .2L6 15q-3-1.700-6 0z" fill="#4b8df0" />
          <path d="M8.300 9.500q3.200 1.300 7 0L13.700 15.500q-3.500 1.300-7 0z" fill="#fbc52e" />
        </svg>
        <span className="font-['Liberation_Sans',sans-serif] text-[16px] leading-5 font-bold italic [text-shadow:1px_1px_1px_#1b4b1b]">пуск</span>
      </button>
      <div className="flex min-w-0 flex-1 gap-[2px] pt-[3px] pb-[3px]">
        {TASKS.map(({ title, icon, active }) => (
          <button
            key={title}
            type="button"
            className={clsx(
              "flex w-[158px] items-center gap-[4px] rounded-[3px] pl-[10px] text-left whitespace-pre",
              active ? "bg-[#1b4bb0] shadow-[inset_1px_1px_1px_#0d2f80]" : "bg-linear-to-b from-[#5a98fb] via-[#3b80f5] via-20% to-[#3577ea] shadow-[inset_-1px_-1px_1px_#2257c4]"
            )}
          >
            {icon}
            <span className="font-[Roboto,'Noto_Sans',sans-serif] whitespace-pre">{title}</span>
          </button>
        ))}
      </div>
      <div className="mr-[20px] flex items-center"><span className="bg-[#3163c5] px-px leading-5">KK</span></div>
      <div className="flex items-center gap-px border-l border-[#0e4ba8] bg-linear-to-b from-[#3fbff8] via-[#1290e8] via-20% to-[#128de6] pr-[13px]">
        <button type="button" aria-label="Показать скрытые значки" className="-ml-[10px]">
          <svg width="18" height="18" viewBox="0 0 18 18">
            <circle cx="9" cy="9" r="8" fill="#2f8ff2" stroke="#a6d3fb" />
            <path d="M10.500 5L6.500 9l4 4" fill="none" stroke="#fff" strokeWidth="2" />
          </svg>
        </button>
        <svg width="16" height="16" viewBox="0 0 16 16" aria-hidden="true">
          <path d="M6.500 1.500h8v7h-8zM1.500 5.500h7v6h-7z" fill="#20346b" stroke="#b9c4dc" />
          <path d="M8 10h5v2H8zM2 13h6v2H2z" fill="#8894b3" />
        </svg>
        <time className="ml-[8px]">15:12</time>
      </div>
    </div>
  );
}

export default function App() {
  return (
    <div className="flex h-screen flex-col overflow-hidden bg-[#bfdbff] font-['Noto_Sans','Open_Sans',sans-serif]">
      <TitleBar />
      <RibbonTabs />
      <Ribbon />
      <FormulaBar />
      <div className="h-[3px] shrink-0 border-t border-b border-[#6f93c2] bg-[#e3eefb]" />
      <main className="flex min-h-0 flex-1">
        <Sheet />
        <VerticalScroll />
      </main>
      <SheetTabs />
      <StatusBar />
      <Taskbar />
    </div>
  );
}
